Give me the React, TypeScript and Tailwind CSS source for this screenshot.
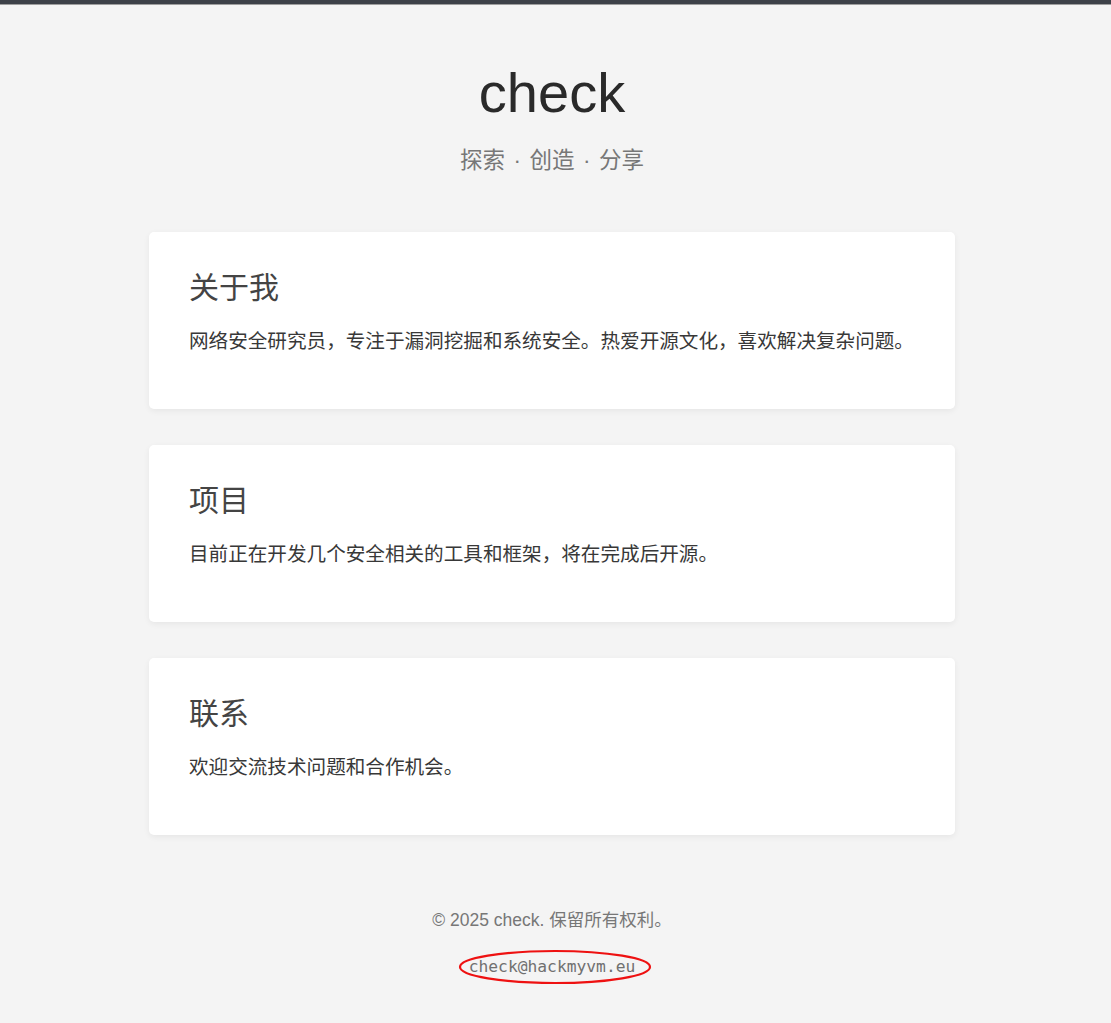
import React from "react";

const sans = { fontFamily: '"Liberation Sans", "Noto Sans CJK SC", sans-serif' };

function Card({ title, text }: { title: string; text: string }) {
  return (
    <section className="bg-white rounded-[5px] shadow-[0_2px_6px_rgba(0,0,0,0.06)] h-[177px] px-[40px] pt-[38px]">
      <h2 className="text-[30px] leading-[36px] text-[#444] font-normal">{title}</h2>
      <p className="mt-[19px] text-[19.6px] leading-[32px] text-[#383838] whitespace-nowrap">{text}</p>
    </section>
  );
}

export default function App() {
  return (
    <div className="min-h-[1023px] bg-[#f4f4f4]" style={sans}>
      <div className="h-[4px] bg-[#3d4148] border-b border-[#9e9e9e] box-content" />
      <div className="w-[1104px]">
        <header className="flex flex-col items-center pt-[57px]">
          <h1 className="text-[56px] leading-[62px] text-[#2a2a2a] font-normal">check</h1>
          <p className="mt-[20px] text-[22.5px] leading-[33px] text-[#777]">
            探索<span className="mx-[8.5px]">·</span>创造<span className="mx-[8.5px]">·</span>分享
          </p>
        </header>
        <main className="w-[806px] mx-auto mt-[55px] flex flex-col gap-[36px]">
          <Card title="关于我" text="网络安全研究员，专注于漏洞挖掘和系统安全。热爱开源文化，喜欢解决复杂问题。" />
          <Card title="项目" text="目前正在开发几个安全相关的工具和框架，将在完成后开源。" />
          <Card title="联系" text="欢迎交流技术问题和合作机会。" />
        </main>
        <footer className="flex flex-col items-center mt-[73px] pb-[38px]">
          <p className="text-[17.5px] leading-[24px] text-[#777]">© 2025 check. 保留所有权利。</p>
          <div className="relative mt-[23px]">
            <span className="text-[16.3px] leading-[24px] text-[#707070]" style={{ fontFamily: '"DejaVu Sans Mono", monospace' }}>
              check@hackmyvm.eu
            </span>
            <svg className="absolute left-[calc(50%+3px)] top-1/2 -translate-x-1/2 -translate-y-1/2 pointer-events-none" width="196" height="38" viewBox="0 0 196 38">
              <ellipse cx="98" cy="19" rx="95" ry="16" fill="none" stroke="#ee1111" strokeWidth="2.2" />
            </svg>
          </div>
        </footer>
      </div>
    </div>
  );
}
